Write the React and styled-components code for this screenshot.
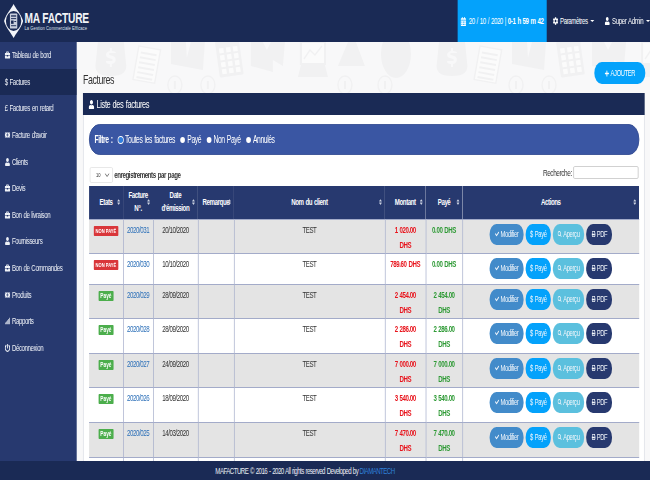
import React from "react";
import styled, { createGlobalStyle } from "styled-components";
import {
  FaBriefcase, FaUser, FaCalendarAlt, FaCog, FaCheck, FaSearch, FaPrint, FaPlus, FaPowerOff,
  FaSort, FaMoneyBillAlt, FaSignal,
} from "react-icons/fa";

/* The reference is a wide page squeezed horizontally to 650px: the page is laid out
   at 956px and scaled on X, so that the letters and shapes get the same narrow look. */
const Global = createGlobalStyle`
  html, body { margin: 0; padding: 0; width: 650px; height: 480px; overflow: hidden; }
  body { font-family: "Liberation Sans", Arial, sans-serif; font-size: 9px; letter-spacing: -0.6px; word-spacing: 0.9px; color: #333; }
  * { box-sizing: border-box; }
`;

const Page = styled.div`
  width: 956px; height: 480px; display: grid;
  grid-template-rows: 42px minmax(0, 1fr) 19px; grid-template-columns: 956px;
  overflow: hidden; transform: scaleX(0.68); transform-origin: 0 0; filter: blur(0.35px);
`;
const Header = styled.header`
  background: #1a2a55; display: flex; align-items: stretch; color: #fff;
`;
const Brand = styled.div`
  width: 674px; display: flex; align-items: center; padding-left: 6px; gap: 2px;
`;
const BrandText = styled.div`display: flex; flex-direction: column; margin-top: -1px;`;
const BrandName = styled.div`
  font-size: 15px; font-weight: 700; line-height: 15px; letter-spacing: -0.3px; word-spacing: 0; color: #f2f4f8;
`;
const BrandSub = styled.div`
  font-size: 6px; line-height: 7px; letter-spacing: 0.1px; word-spacing: 0; color: #dfe3ec; white-space: nowrap;
`;
const DateBox = styled.div`
  width: 131px; background: #04a2fb; display: flex; align-items: center; justify-content: center; gap: 3px;
  white-space: nowrap;
  b { font-weight: 700; }
`;
const NavLink = styled.div`
  display: flex; align-items: center; gap: 3px;
  margin-left: ${p => p.$ml}px; white-space: nowrap;
`;
const Caret = styled.span`
  width: 0; height: 0; border-left: 3px solid transparent; border-right: 3px solid transparent;
  border-top: 2px solid #fff; margin-left: 1px;
`;
const Middle = styled.div`
  display: grid; grid-template-columns: 113px minmax(0, 1fr); min-height: 0; overflow: hidden;
`;
const Sidebar = styled.nav`
  background: #27396f; display: flex; flex-direction: column;
`;
const SideItem = styled.div`
  height: 26.6px; flex: none; display: flex; align-items: center; gap: 2.5px; padding-left: 7px;
  color: #eef1f7; white-space: nowrap;
  background: ${p => (p.$active ? "#1a2a55" : "transparent")};
`;
const Main = styled.main`
  position: relative; background: #f8f8f9; padding: 20px 8px 0 9px; min-height: 0; overflow: hidden;
`;
const Wallpaper = styled.svg`
  position: absolute; left: 0; top: 0; width: 843px; height: 419px;
`;
const TitleRow = styled.div`
  position: relative; display: flex; justify-content: space-between; align-items: center;
  height: 22px; margin-bottom: 9px;
`;
const Title = styled.h1`
  margin: 13px 0 0 0; font-size: 13px; font-weight: 400; color: #333;
`;
const AddButton = styled.button`
  width: 75px; height: 22px; border: 0; border-radius: 11px; background: #04a2fb; color: #fff;
  font: 400 8.5px "Liberation Sans", sans-serif; letter-spacing: -0.5px; margin-right: -1px;
  display: flex; align-items: center; justify-content: center; gap: 2px; padding: 0;
`;
const Card = styled.section`
  position: relative; background: #fff; border: 1px solid #d8dbe3; border-top: 0; height: 400px;
`;
const CardHead = styled.div`
  height: 22px; background: #1a2a55; color: #fff; display: flex; align-items: center; gap: 3px; padding-left: 8px;
  margin: 0 -1px; font-size: 11px;
`;
const CardBody = styled.div`padding: 9px 7px 0 8px;`;
const FilterBar = styled.div`
  height: 31px; border-radius: 15px; background: #3a56a3; border: 1px solid #30498f;
  display: flex; align-items: center; padding-left: 7px; color: #fff;
  font-size: 10px; margin-bottom: 11px;
`;
const FilterLabel = styled.b`margin-right: 8px;`;
const Radio = styled.label`
  display: flex; align-items: center; gap: 3px; margin-right: 8px; white-space: nowrap;
  &::before {
    content: ""; width: 7px; height: 6px; border-radius: 50%;
    background: ${p => (p.$on ? "#2f7fe0" : "#fff")};
    outline: ${p => (p.$on ? "1px solid #fff" : "none")};
  }
`;
const Controls = styled.div`
  display: flex; align-items: center; justify-content: space-between; height: 17px; margin-bottom: 3px;
  color: #333; padding-left: 1px;
`;
const LengthWrap = styled.div`display: flex; align-items: center; gap: 2px; font-weight: 700;`;
const FakeSelect = styled.div`
  width: 34px; height: 16px; border: 1px solid #e4e4e4; border-radius: 2px; background: #fff;
  display: flex; align-items: center; justify-content: space-between; padding: 0 4px 0 8px;
  font-size: 6px; font-weight: 400; letter-spacing: 0;
  svg { display: block; }
`;
const SearchWrap = styled.div`
  display: flex; align-items: center; gap: 2px; align-self: flex-start; margin-right: 1px; font-size: 9.5px;
`;
const SearchBox = styled.div`
  width: 96px; height: 13px; border: 1px solid #c8c8c8; border-radius: 2px; background: #fff;
`;
const Table = styled.table`
  width: 809px; table-layout: fixed; border-collapse: collapse; font-size: 9px;
`;
const Th = styled.th`
  position: relative; height: 33px; background: #27396f; color: #fff; font-weight: 700; text-align: center;
  padding: 0; line-height: 13px; white-space: nowrap; border: 0;
`;
const SortIcon = styled.span`
  position: absolute; right: 3px; top: 50%; transform: translateY(-50%); display: flex; color: #cdd3e2;
  font-size: 7px;
`;
const Tr = styled.tr`
  background: ${p => (p.$odd ? "#e4e4e4" : "#fff")};
`;
const Td = styled.td`
  height: ${p => p.$h}px; border: 1px solid #a3abc9; padding: 3px 5px 0;
  text-align: center; vertical-align: top; line-height: 15px; color: ${p => p.$color || "#333"};
  font-weight: ${p => (p.$bold ? 700 : 400)};
  &:first-child { border-left: 0; }
  &:last-child { border-right: 0; }
`;
const Badge = styled.span`
  display: inline-block; padding: 0 3px; height: 10px; line-height: 10px; border-radius: 1px;
  background: ${p => (p.$red ? "#d9363a" : "#4cae4c")}; color: #fff; font-size: ${p => (p.$red ? 6 : 7)}px; font-weight: 700;
  letter-spacing: 0; word-spacing: 0; white-space: nowrap; vertical-align: top; margin-top: 3px;
`;
const Link = styled.span`color: #2b6fb8;`;
const Actions = styled.div`
  display: flex; align-items: center; justify-content: center; gap: 3px; margin-top: 1px;
`;
const ActionBtn = styled.span`
  height: 21px; width: ${p => p.$w}px; border-radius: 10px; background: ${p => p.$bg}; color: #f2f6fb; flex: none;
  display: inline-flex; align-items: center; justify-content: center; gap: 2px; font-size: 8.5px; letter-spacing: -0.5px;
`;
const Footer = styled.footer`
  background: #1a2a55; color: #e9ecf3; display: flex; align-items: center; justify-content: center;
  font-size: 9px; letter-spacing: -0.8px; word-spacing: 0.9px; padding-right: 59px;
  a { color: #2f80d8; margin-left: 2px; }
`;

function Logo() {
  return (
    <svg width="28" height="36" viewBox="0 0 26 38" preserveAspectRatio="none" aria-hidden="true">
      <path d="M13 1 C16 6 23 11 26 19 C23 27 16 32 13 37 C10 32 3 27 0 19 C3 11 10 6 13 1 Z" fill="#f4f6fa" />
      <circle cx="13" cy="19" r="10.5" fill="#1a2a55" />
      <rect x="8" y="11" width="10" height="16" rx="1" fill="#c9cfdd" />
      <rect x="9.5" y="13" width="7" height="1.4" fill="#1a2a55" />
      <rect x="9.5" y="16" width="7" height="1" fill="#1a2a55" />
      <rect x="9.5" y="18.5" width="3.5" height="3.5" fill="#1a2a55" />
      <rect x="14" y="19" width="2.5" height="1" fill="#1a2a55" />
      <rect x="9.5" y="23.5" width="7" height="1" fill="#1a2a55" />
    </svg>
  );
}

const WALL = "#f1f1f2";
const WALL_BG = "#f8f8f9";

function WallpaperArt() {
  const Bag = ({ x }) => (
    <g transform={`translate(${x} 0)`} fill={WALL}>
      <path d="M3 0 L29 0 L31 20 C33 30 28 34 16 34 C4 34 -1 30 1 20 Z" />
      <path d="M15 6 L17 6 L17 9 C20 9 21 10 21 11 L15 11 C14 11 14 13 15 13 L18 14 C22 15 22 21 17 22 L17 25 L15 25 L15 22 C12 22 11 21 11 19 L17 19 C18 19 18 17 17 17 L14 16 C10 15 10 10 15 9 Z" fill={WALL_BG} />
    </g>
  );
  const Doc = ({ x }) => (
    <g transform={`translate(${x} 4) rotate(10)`}>
      <rect width="22" height="34" fill="#fbfbfb" stroke={WALL} strokeWidth="1.4" />
      {[5, 10, 15, 20, 25, 30].map(v => <rect key={v} x="3" y={v} width="16" height="2" fill={WALL} />)}
    </g>
  );
  const Book = ({ x }) => (
    <g transform={`translate(${x} 0)`} fill={WALL}>
      <path d="M0 0 L34 0 L32 28 L0 22 Z" />
      <path d="M15 0 L20 0 L16 16 Z" fill={WALL_BG} />
    </g>
  );
  const Calc = ({ x }) => (
    <g transform={`translate(${x} 0) rotate(-8)`}>
      <rect width="24" height="36" rx="1.5" fill={WALL} />
      {[7, 14, 21, 28].map(yy => [3, 10, 17].map(xx => (
        <rect key={`${xx}-${yy}`} x={xx} y={yy} width="4.5" height="5" fill="#fbfbfb" />
      )))}
    </g>
  );
  const Shirt = ({ x }) => (
    <path transform={`translate(${x} 0)`} d="M0 0 L12 0 L16 8 L20 0 L34 0 L32 24 L22 18 L22 30 L0 24 Z" fill={WALL} />
  );
  const Laptop = ({ x }) => (
    <g transform={`translate(${x} 0)`}>
      <rect x="3" y="0" width="24" height="22" fill="#fbfbfb" stroke={WALL} strokeWidth="2" />
      <path d="M6 17 L12 8 L17 13 L24 4" fill="none" stroke={WALL} strokeWidth="1.4" />
      <path d="M3 23 L27 23 L30 35 L0 35 Z" fill={WALL} />
    </g>
  );
  const Hill = ({ x }) => <path transform={`translate(${x} 0)`} d="M10 0 L18 0 L27 24 L0 24 Z" fill={WALL} />;
  const Mouse = ({ x }) => <ellipse cx={x + 15} cy={12} rx="15" ry="24" fill={WALL} />;
  const Coin = ({ x, y = 43 }) => (
    <g>
      <ellipse cx={x} cy={y} rx="7" ry="9" fill="none" stroke={WALL} strokeWidth="1.4" />
      <rect x={x - 1} y={y - 4} width="2" height="8" fill={WALL} />
    </g>
  );
  return (
    <Wallpaper viewBox="0 0 573 419" preserveAspectRatio="none" aria-hidden="true">
      {[0, 341].map(o => (
        <g key={o}>
          <Bag x={18 + o} />
          <Doc x={62 + o} />
          <Book x={94 + o} />
          <Calc x={138 + o} />
          <Shirt x={174 + o} />
          <Laptop x={221 + o} />
          <Hill x={261 + o} />
          <Mouse x={304 + o} />
          <Coin x={98 + o} />
          <Coin x={131 + o} />
          <Coin x={268 + o} />
          <Coin x={308 + o} />
        </g>
      ))}
    </Wallpaper>
  );
}

const iconSize = { size: 8 };

const menu = [
  ["Tableau de bord", <FaBriefcase {...iconSize} />],
  ["Factures", <span>$</span>, true],
  ["Factures en retard", <span>£</span>],
  ["Facture d'avoir", <FaMoneyBillAlt {...iconSize} />],
  ["Clients", <FaUser {...iconSize} />],
  ["Devis", <FaBriefcase {...iconSize} />],
  ["Bon de livraison", <FaBriefcase {...iconSize} />],
  ["Fournisseurs", <FaUser {...iconSize} />],
  ["Bon de Commandes", <FaBriefcase {...iconSize} />],
  ["Produits", <FaMoneyBillAlt {...iconSize} />],
  ["Rapports", <FaSignal {...iconSize} />],
  ["Déconnexion", <FaPowerOff {...iconSize} />],
];

const rows = [
  ["NON PAYÉ", "2020/031", "20/10/2020", "1 020.00 DHS", "0.00 DHS", 34],
  ["NON PAYÉ", "2020/030", "10/10/2020", "789.60 DHS", "0.00 DHS", 31],
  ["Payé", "2020/029", "28/09/2020", "2 454.00 DHS", "2 454.00 DHS", 34],
  ["Payé", "2020/028", "28/09/2020", "2 286.00 DHS", "2 286.00 DHS", 35],
  ["Payé", "2020/027", "24/09/2020", "7 000.00 DHS", "7 000.00 DHS", 34],
  ["Payé", "2020/026", "18/09/2020", "3 540.00 DHS", "3 540.00 DHS", 35],
  ["Payé", "2020/025", "14/03/2020", "7 470.00 DHS", "7 470.00 DHS", 35],
];

const cols = [
  ["etats", "Etats", 50],
  ["facture", <>Facture<br />N°.</>, 44],
  ["date", <>Date<br />d'émission</>, 66],
  ["remarque", "Remarque", 53],
  ["client", "Nom du client", 222],
  ["montant", "Montant", 60],
  ["paye", "Payé", 54],
  ["actions", "Actions", 260],
];

export default function App() {
  return (
    <Page>
      <Global />
      <Header>
        <Brand>
          <Logo />
          <BrandText>
            <BrandName>MA FACTURE</BrandName>
            <BrandSub>La Gestion Commerciale Efficace</BrandSub>
          </BrandText>
        </Brand>
        <DateBox><FaCalendarAlt size={9} /> <span>20 / 10 / 2020 | <b>0-1 h 59 m 42</b></span></DateBox>
        <NavLink $ml={9}><FaCog size={8} /> Paramètres <Caret /></NavLink>
        <NavLink $ml={15}><FaUser size={8} /> Super Admin <Caret /></NavLink>
      </Header>
      <Middle>
        <Sidebar>
          {menu.map(([label, icon, active]) => (
            <SideItem key={label} $active={active}>{icon}{label}</SideItem>
          ))}
        </Sidebar>
        <Main>
          <WallpaperArt />
          <TitleRow>
            <Title>Factures</Title>
            <AddButton><FaPlus size={7} /> AJOUTER</AddButton>
          </TitleRow>
          <Card>
            <CardHead><FaUser size={9} /> Liste des factures</CardHead>
            <CardBody>
              <FilterBar>
                <FilterLabel>Filtre :</FilterLabel>
                <Radio $on>Toutes les factures</Radio>
                <Radio>Payé</Radio>
                <Radio>Non Payé</Radio>
                <Radio>Annulés</Radio>
              </FilterBar>
              <Controls>
                <LengthWrap>
                  <FakeSelect>10
                    <svg width="7" height="4" viewBox="0 0 7 4"><path d="M0.5 0.5 L3.5 3.5 L6.5 0.5" fill="none" stroke="#555" strokeWidth="0.9" /></svg>
                  </FakeSelect>
                  enregistrements par page
                </LengthWrap>
                <SearchWrap>Recherche:<SearchBox /></SearchWrap>
              </Controls>
              <Table>
                <colgroup>{cols.map(([k, , w]) => <col key={k} width={w} />)}</colgroup>
                <thead>
                  <tr>
                    {cols.map(([k, label]) => (
                      <Th key={k}>{label}<SortIcon><FaSort /></SortIcon></Th>
                    ))}
                  </tr>
                </thead>
                <tbody>
                  {rows.map((r, i) => (
                    <Tr key={r[1]} $odd={i % 2 === 0}>
                      <Td $h={r[5]}><Badge $red={r[0] !== "Payé"}>{r[0]}</Badge></Td>
                      <Td><Link>{r[1]}</Link></Td>
                      <Td>{r[2]}</Td>
                      <Td />
                      <Td>TEST</Td>
                      <Td $color="#e8141c" $bold>{r[3]}</Td>
                      <Td $color="#2e9a35" $bold>{r[4]}</Td>
                      <Td>
                        <Actions>
                          <ActionBtn $w={50} $bg="#428bca"><FaCheck size={6} /> Modifier</ActionBtn>
                          <ActionBtn $w={37} $bg="#04a2fb">$ Payé</ActionBtn>
                          <ActionBtn $w={46} $bg="#5bc0de"><FaSearch size={6} /> Aperçu</ActionBtn>
                          <ActionBtn $w={38} $bg="#27396f"><FaPrint size={6} /> PDF</ActionBtn>
                        </Actions>
                      </Td>
                    </Tr>
                  ))}
                  <Tr>
                    <Td $h={12} /><Td /><Td /><Td /><Td /><Td /><Td /><Td />
                  </Tr>
                </tbody>
              </Table>
            </CardBody>
          </Card>
        </Main>
      </Middle>
      <Footer>MAFACTURE © 2016 - 2020 All rights reserved Developed by <a>DIAMANTECH</a></Footer>
    </Page>
  );
}
